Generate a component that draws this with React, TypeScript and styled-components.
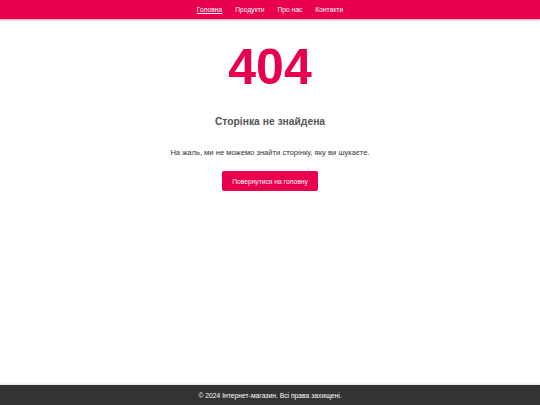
import React from 'react';
import styled, { createGlobalStyle } from 'styled-components';

const GlobalStyle = createGlobalStyle`
  html, body {
    margin: 0;
    padding: 0;
    font-family: "Liberation Sans", Arial, sans-serif;
    background: #fff;
  }
`;

const Page = styled.div`
  min-height: 405px;
  display: flex;
  flex-direction: column;
`;

const Header = styled.header`
  background: #e8004c;
  height: 19px;
  display: flex;
  align-items: center;
  justify-content: center;
  box-shadow: 0 1px 2px rgba(232, 0, 76, 0.45);
`;

const Nav = styled.nav`
  display: flex;
  gap: 13px;
`;

const NavLink = styled.a<{ active?: boolean }>`
  color: #fff;
  font-size: 6.7px;
  line-height: 9px;
  text-decoration: ${({ active }) => (active ? 'underline' : 'none')};
  text-underline-offset: 1px;
`;

const Main = styled.main`
  flex: 1;
  display: flex;
  flex-direction: column;
  align-items: center;
  padding-top: 23px;
`;

const Code = styled.h1`
  margin: 0;
  font-size: 50px;
  font-weight: bold;
  color: #e8004c;
  line-height: 50px;
`;

const Title = styled.h2`
  margin: 24px 0 0;
  font-size: 10.3px;
  font-weight: bold;
  color: #555;
  line-height: 12px;
`;

const Text = styled.p`
  margin: 20px 0 0;
  font-size: 7.6px;
  color: #333;
  line-height: 9px;
`;

const Button = styled.a`
  margin-top: 14px;
  background: #e8004c;
  color: #fff;
  font-size: 6.7px;
  height: 20px;
  width: 96px;
  display: flex;
  align-items: center;
  justify-content: center;
  border-radius: 2px;
`;

const Footer = styled.footer`
  background: #333;
  height: 20px;
  display: flex;
  align-items: center;
  justify-content: center;
  color: #fff;
  font-size: 6.75px;
  box-shadow: 0 -1px 2px rgba(0, 0, 0, 0.15);
`;

export default function App() {
  return (
    <Page>
      <GlobalStyle />
      <Header>
        <Nav>
          <NavLink active>Головна</NavLink>
          <NavLink>Продукти</NavLink>
          <NavLink>Про нас</NavLink>
          <NavLink>Контакти</NavLink>
        </Nav>
      </Header>
      <Main>
        <Code>404</Code>
        <Title>Сторінка не знайдена</Title>
        <Text>На жаль, ми не можемо знайти сторінку, яку ви шукаєте.</Text>
        <Button>Повернутися на головну</Button>
      </Main>
      <Footer>© 2024 Інтернет-магазин. Всі права захищені.</Footer>
    </Page>
  );
}
